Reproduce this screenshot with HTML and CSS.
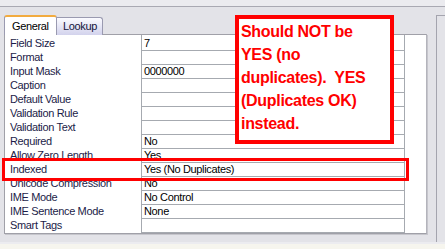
FILE: index.html
```html
<!DOCTYPE html>
<html lang="en">
<head>
    <meta charset="UTF-8">
    <title>Field Properties</title>
    <link rel="stylesheet" href="styles.css">
</head>
<body>
    <div class="topbar"></div>

    <div class="main">
        <div class="sheet">
            <div class="tabs">
                <div class="tab active">General</div>
                <div class="tab">Lookup</div>
            </div>
            <div class="panel">
                <div class="row"><span class="label">Field Size</span><span class="value">7</span></div>
                <div class="row"><span class="label">Format</span><span class="value"></span></div>
                <div class="row"><span class="label">Input Mask</span><span class="value">0000000</span></div>
                <div class="row"><span class="label">Caption</span><span class="value"></span></div>
                <div class="row"><span class="label">Default Value</span><span class="value"></span></div>
                <div class="row"><span class="label">Validation Rule</span><span class="value"></span></div>
                <div class="row"><span class="label">Validation Text</span><span class="value"></span></div>
                <div class="row"><span class="label">Required</span><span class="value">No</span></div>
                <div class="row"><span class="label">Allow Zero Length</span><span class="value">Yes</span></div>
                <div class="row"><span class="label">Indexed</span><span class="value">Yes (No Duplicates)</span></div>
                <div class="row"><span class="label">Unicode Compression</span><span class="value">No</span></div>
                <div class="row"><span class="label">IME Mode</span><span class="value">No Control</span></div>
                <div class="row"><span class="label">IME Sentence Mode</span><span class="value">None</span></div>
                <div class="row"><span class="label">Smart Tags</span><span class="value"></span></div>
            </div>
        </div>
        <div class="side"></div>
    </div>

    <div class="bottom"></div>

    <!-- annotations drawn over the sheet -->
    <div class="highlight"></div>
    <div class="note">
        Should NOT be<br>
        YES (no<br>
        duplicates).&nbsp; YES<br>
        (Duplicates OK)<br>
        instead.
    </div>
</body>
</html>
```

FILE: styles.css
```css
* {
    box-sizing: border-box;
}

body {
    margin: 0;
    width: 445px;
    height: 249px;
    overflow: hidden;
    background-color: #e3e3e8;
    font-family: "Liberation Sans", Arial, sans-serif;
    font-size: 11px;
    letter-spacing: -0.35px;
    position: relative;
}

.topbar {
    height: 7px;
    background-color: #ebebef;
    border-bottom: 1px solid #a9a9b2;
}

.main {
    display: flex;
    height: 235px;
}

.sheet {
    width: 427px;
    padding: 8px 0 0 4px;
}

.tabs {
    display: flex;
    align-items: flex-end;
    height: 19px;
}

.tab {
    position: relative;
    height: 18px;
    width: 46px;
    margin-bottom: -1px;
    padding: 2px 0 0 6px;
    color: #15153c;
    border: 1px solid #9a9ab0;
    border-left: none;
    border-bottom: none;
    border-radius: 0 3px 0 0;
    background: linear-gradient(#fbfbff, #d2d2ec);
}

.tab.active {
    z-index: 1;
    height: 20px;
    width: 53px;
    padding: 3px 0 0 7px;
    color: #000;
    background: #fff;
    border-left: 1px solid #9a9ab0;
    border-top: 2px solid #f2ab3f;
    border-radius: 3px 3px 0 0;
}

.panel {
    width: 423px;
    height: 200px;
    background-color: #fff;
    border: 1px solid #a0a0a8;
    border-right-color: #b4b4bc;
    box-shadow: 1px 1px 0 #c6c6cc;
}

.row {
    display: flex;
    height: 14px;
    line-height: 13px;
}

.row:first-child {
    height: 16px;
    line-height: 16px;
}

.label {
    width: 136px;
    padding-left: 5px;
    color: #1c1c48;
    white-space: nowrap;
}

.value {
    width: 264px;
    padding-left: 2px;
    color: #000;
    border-left: 1px solid #a6aab0;
    border-right: 1px solid #a6aab0;
    border-bottom: 1px solid #a6aab0;
    white-space: nowrap;
}

.side {
    flex: 1;
    margin: 8px 0 0 9px;
    border-left: 1px solid #a4a4ae;
    border-top: 1px solid #a4a4ae;
}

.bottom {
    height: 7px;
    background-color: #f6f5ee;
    border-top: 2px solid #ececf0;
}

.highlight {
    position: absolute;
    left: 2px;
    top: 158px;
    width: 407px;
    height: 23px;
    border: 3px solid #ff0000;
}

.note {
    position: absolute;
    left: 235px;
    top: 15px;
    width: 159px;
    height: 129px;
    padding: 1px 0 0 2px;
    background-color: #fff;
    border: 4px solid #ff0000;
    color: #ff0000;
    font-size: 16px;
    font-weight: bold;
    line-height: 23px;
    letter-spacing: -0.3px;
    white-space: nowrap;
}
```
